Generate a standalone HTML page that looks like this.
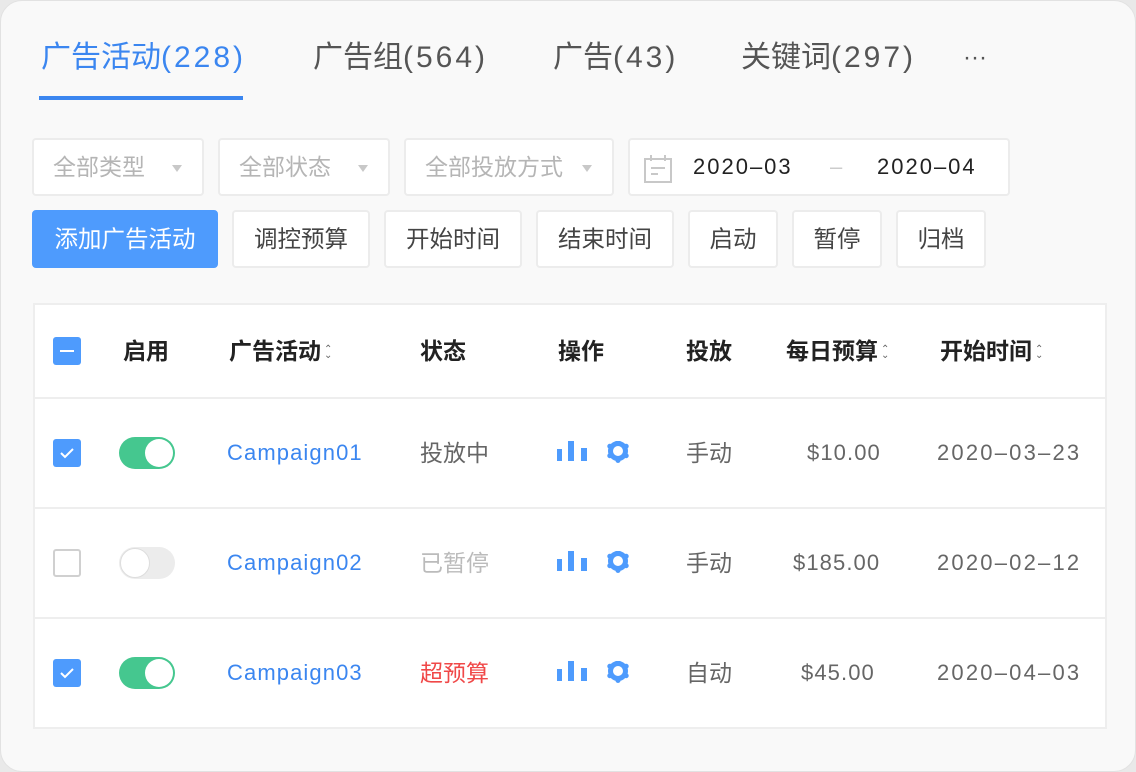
<!DOCTYPE html>
<html><head><meta charset="utf-8"><style>
*{box-sizing:border-box;margin:0;padding:0}
body{width:1136px;height:772px;background:#e9e9e9;font-family:"Liberation Sans","Noto Sans CJK SC",sans-serif;position:relative;overflow:hidden}
.card{position:absolute;left:0;top:0;width:1136px;height:772px;background:#f9f9f9;border-radius:22px;border:1px solid #e2e2e2}
.abs{position:absolute;white-space:nowrap}
.n{letter-spacing:1.1px}
.tab .n{letter-spacing:3px}
.tab{font-size:30px;color:#555;top:38px;line-height:38px}
.box{position:absolute;background:#fff;border:2px solid #ececec;border-radius:4px}
.dd{top:137px;height:58px;font-size:23px;color:#b5b5b5;line-height:54px;padding-left:19px}
.dd .ar{position:absolute;right:20px;top:25px;width:0;height:0;border-left:5px solid transparent;border-right:5px solid transparent;border-top:7px solid #c8c8c8}
.bt{top:209px;height:58px;font-size:23.5px;color:#444;line-height:54px;text-align:center}
.th{font-size:23px;color:#222;font-weight:bold;top:337px;line-height:26px}
.td{font-size:22px;color:#666;line-height:26px}
.sort{display:inline-block;font-size:10px;color:#666;vertical-align:middle;line-height:6px;margin-left:3px;font-weight:normal}
.cb{position:absolute;left:52px;width:28px;height:28px;border-radius:3px}
.on{background:#4e9bfd}
.off{border:2px solid #d0d0d0;background:#fff}
.tg{position:absolute;left:118px;width:56px;height:32px;border-radius:16px}
.tg i{position:absolute;top:2px;width:28px;height:28px;border-radius:50%;background:#fff}
.link{color:#3b86f0}
.line{position:absolute;left:33px;width:1072px;height:2px;background:#eeeeee}
</style></head><body>
<div class="card">
<div class="abs tab" style="left:40px;color:#3b86f0">广告活动<span class="n">(228)</span></div>
<div class="abs" style="left:38px;top:95px;width:204px;height:4px;background:#3b86f0"></div>
<div class="abs tab" style="left:312px">广告组<span class="n">(564)</span></div>
<div class="abs tab" style="left:552px">广告<span class="n">(43)</span></div>
<div class="abs tab" style="left:740px">关键词<span class="n">(297)</span></div>
<div class="abs tab" style="left:962px;font-size:24px;top:38px">···</div>

<div class="box dd" style="left:31px;width:172px">全部类型<span class="ar"></span></div>
<div class="box dd" style="left:217px;width:172px">全部状态<span class="ar"></span></div>
<div class="box dd" style="left:403px;width:210px">全部投放方式<span class="ar"></span></div>
<div class="box dd" style="left:627px;width:382px;color:#222;font-size:22px">
<svg class="abs" style="left:14px;top:15px" width="28" height="28" viewBox="0 0 28 28" fill="none" stroke="#c8c8c8" stroke-width="2"><rect x="1" y="4" width="26" height="23"/><line x1="7" y1="0" x2="7" y2="6"/><line x1="21" y1="0" x2="21" y2="6"/><line x1="7" y1="13" x2="21" y2="13"/><line x1="7" y1="19" x2="14" y2="19"/></svg>
<span class="abs" style="left:63px;top:0;letter-spacing:2px">2020–03</span>
<span class="abs" style="left:200px;top:0;color:#ccc">–</span>
<span class="abs" style="left:247px;top:0;letter-spacing:2px">2020–04</span>
</div>

<div class="box bt" style="left:31px;width:186px;background:#4e9bfd;border-color:#4e9bfd;color:#fff">添加广告活动</div>
<div class="box bt" style="left:231px;width:138px">调控预算</div>
<div class="box bt" style="left:383px;width:138px">开始时间</div>
<div class="box bt" style="left:535px;width:138px">结束时间</div>
<div class="box bt" style="left:687px;width:90px">启动</div>
<div class="box bt" style="left:791px;width:90px">暂停</div>
<div class="box bt" style="left:895px;width:90px">归档</div>

<div class="abs" style="left:32px;top:302px;width:1074px;height:426px;background:#fff;border:2px solid #eeeeee"></div>
<div class="line" style="top:396px"></div>
<div class="line" style="top:506px"></div>
<div class="line" style="top:616px"></div>

<div class="cb on" style="top:336px"><div class="abs" style="left:7px;top:13px;width:14px;height:2px;background:#fff"></div></div>
<div class="abs th" style="left:122px">启用</div>
<div class="abs th" style="left:228px">广告活动<span class="sort">⌃<br>⌄</span></div>
<div class="abs th" style="left:419px">状态</div>
<div class="abs th" style="left:557px">操作</div>
<div class="abs th" style="left:685px">投放</div>
<div class="abs th" style="left:785px">每日预算<span class="sort">⌃<br>⌄</span></div>
<div class="abs th" style="left:939px">开始时间<span class="sort">⌃<br>⌄</span></div>

<div class="cb on" style="top:438px"><svg class="abs" style="left:7px;top:8px" width="14" height="12" viewBox="0 0 14 12"><path d="M1 6l4 4 8-8" fill="none" stroke="#fff" stroke-width="2"/></svg></div>
<div class="tg" style="top:436px;background:#45c78f"><i style="left:26px"></i></div>
<div class="abs td link n" style="left:226px;top:439px">Campaign01</div>
<div class="abs td" style="left:419px;top:439px;font-size:23px">投放中</div>
<div class="abs td" style="left:685px;top:439px;font-size:23px">手动</div>
<div class="abs td n" style="left:806px;top:439px">$10.00</div>
<div class="abs td n" style="left:936px;top:439px;letter-spacing:2.2px">2020–03–23</div>

<div class="cb off" style="top:548px"></div>
<div class="tg" style="top:546px;background:#ececec"><i style="left:1px;top:1px;width:30px;height:30px;border:1px solid #ddd"></i></div>
<div class="abs td link n" style="left:226px;top:549px">Campaign02</div>
<div class="abs td" style="left:419px;top:549px;color:#bbb;font-size:23px">已暂停</div>
<div class="abs td" style="left:685px;top:549px;font-size:23px">手动</div>
<div class="abs td n" style="left:792px;top:549px">$185.00</div>
<div class="abs td n" style="left:936px;top:549px;letter-spacing:2.2px">2020–02–12</div>

<div class="cb on" style="top:658px"><svg class="abs" style="left:7px;top:8px" width="14" height="12" viewBox="0 0 14 12"><path d="M1 6l4 4 8-8" fill="none" stroke="#fff" stroke-width="2"/></svg></div>
<div class="tg" style="top:656px;background:#45c78f"><i style="left:26px"></i></div>
<div class="abs td link n" style="left:226px;top:659px">Campaign03</div>
<div class="abs td" style="left:419px;top:659px;color:#f04848;font-size:23px">超预算</div>
<div class="abs td" style="left:685px;top:659px;font-size:23px">自动</div>
<div class="abs td n" style="left:800px;top:659px">$45.00</div>
<div class="abs td n" style="left:936px;top:659px;letter-spacing:2.2px">2020–04–03</div>

<svg class="abs" style="left:556px;top:440px" width="74" height="22" viewBox="0 0 74 22"><g fill="#4e9bfd"><rect x="0" y="8" width="5" height="12"/><rect x="11" y="0" width="6" height="20"/><rect x="24" y="7" width="6" height="13"/></g><g transform="translate(61,10)"><circle r="7.5" fill="none" stroke="#4e9bfd" stroke-width="5"/><g fill="#4e9bfd"><circle cx="0" cy="-9.5" r="2.5"/><circle cx="0" cy="9.5" r="2.5"/><circle cx="8.2" cy="-4.75" r="2.5"/><circle cx="-8.2" cy="-4.75" r="2.5"/><circle cx="8.2" cy="4.75" r="2.5"/><circle cx="-8.2" cy="4.75" r="2.5"/></g></g></svg>
<svg class="abs" style="left:556px;top:550px" width="74" height="22" viewBox="0 0 74 22"><g fill="#4e9bfd"><rect x="0" y="8" width="5" height="12"/><rect x="11" y="0" width="6" height="20"/><rect x="24" y="7" width="6" height="13"/></g><g transform="translate(61,10)"><circle r="7.5" fill="none" stroke="#4e9bfd" stroke-width="5"/><g fill="#4e9bfd"><circle cx="0" cy="-9.5" r="2.5"/><circle cx="0" cy="9.5" r="2.5"/><circle cx="8.2" cy="-4.75" r="2.5"/><circle cx="-8.2" cy="-4.75" r="2.5"/><circle cx="8.2" cy="4.75" r="2.5"/><circle cx="-8.2" cy="4.75" r="2.5"/></g></g></svg>
<svg class="abs" style="left:556px;top:660px" width="74" height="22" viewBox="0 0 74 22"><g fill="#4e9bfd"><rect x="0" y="8" width="5" height="12"/><rect x="11" y="0" width="6" height="20"/><rect x="24" y="7" width="6" height="13"/></g><g transform="translate(61,10)"><circle r="7.5" fill="none" stroke="#4e9bfd" stroke-width="5"/><g fill="#4e9bfd"><circle cx="0" cy="-9.5" r="2.5"/><circle cx="0" cy="9.5" r="2.5"/><circle cx="8.2" cy="-4.75" r="2.5"/><circle cx="-8.2" cy="-4.75" r="2.5"/><circle cx="8.2" cy="4.75" r="2.5"/><circle cx="-8.2" cy="4.75" r="2.5"/></g></g></svg>
</div>
</body></html>
